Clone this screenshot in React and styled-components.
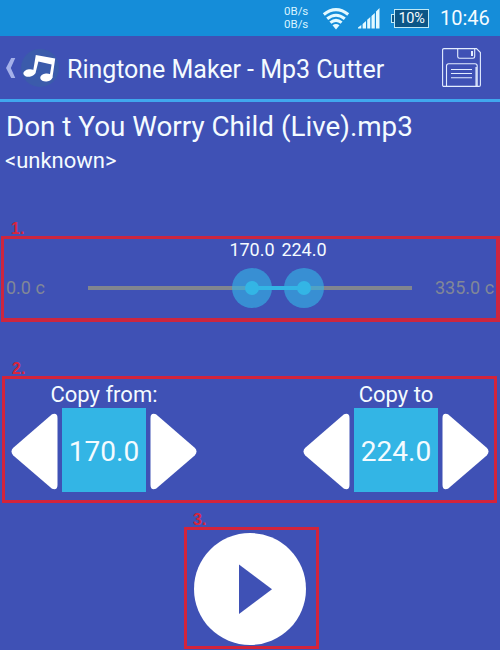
import React from "react";
import styled, { createGlobalStyle } from "styled-components";

const GlobalStyle = createGlobalStyle`
  * { box-sizing: border-box; }
  body { margin: 0; background: #3f51b5; overflow: hidden; }
`;

const Screen = styled.main`
  display: flex;
  flex-direction: column;
  width: 500px;
  height: 650px;
  overflow: hidden;
  background: #3f51b5;
  color: #f4fbff;
  font-family: Roboto, "Liberation Sans", sans-serif;
  white-space: nowrap;
`;

const StatusBar = styled.header`
  display: flex;
  flex: none;
  align-items: center;
  justify-content: flex-end;
  height: 36px;
  padding-right: 10px;
  background: #158dd9;
`;

const Traffic = styled.div`
  display: flex;
  flex-direction: column;
  width: 38px;
  font-size: 11.5px;
  line-height: 13px;
  color: #d9f3ff;
`;

const StatusIcon = styled.svg`
  display: block;
  flex: none;
  margin-right: ${(p) => p.$gap}px;
`;

const BatteryBox = styled.div`
  display: flex;
  align-items: center;
  margin-right: 11px;
`;

const BatteryTip = styled.i`
  width: 4px;
  height: 9px;
  margin-right: -1px;
  border: 1px solid #bfe9f6;
  border-right: 0;
  background: #0b5687;
`;

const BatteryBody = styled.div`
  width: 35px;
  height: 19px;
  border: 1px solid #bfe9f6;
  background: #0b5687;
  font-size: 14.5px;
  line-height: 17px;
  text-align: center;
  letter-spacing: -0.3px;
`;

const Clock = styled.time`
  width: 50px;
  font-size: 20px;
  line-height: 24px;
`;

const Toolbar = styled.nav`
  display: flex;
  flex: none;
  align-items: center;
  height: 66px;
  padding: 0 19px 0 5px;
  border-bottom: 3px solid #40a7ee;
`;

const Title = styled.h1`
  flex: 1;
  margin: 5px 0 0 8px;
  font-size: 25px;
  font-weight: 400;
  line-height: 32px;
  letter-spacing: -0.03px;
`;

const Plain = styled.svg`
  display: block;
  flex: none;
`;

const Track = styled.section`
  flex: none;
  height: 118px;
  padding: 8px 0 0 6px;
`;

const SongName = styled.h2`
  margin: 0;
  font-size: 27.8px;
  font-weight: 400;
  line-height: 34px;
`;

const Artist = styled.p`
  margin: 4px 0 0 -1px;
  font-size: 22px;
  line-height: 26px;
`;

const StepLabel = styled.div`
  display: flex;
  flex: none;
  align-items: flex-end;
  height: ${(p) => p.$height}px;
  padding-left: ${(p) => p.$left}px;
  font: bold 16px/14px "Liberation Sans", sans-serif;
  color: #d8243c;
`;

const RangeBox = styled.section`
  display: flex;
  flex: none;
  align-items: center;
  width: 499px;
  height: 86px;
  margin-left: 1px;
  padding-top: 18px;
  border: 3px solid #cc2640;
  border-width: 3px 4px 4px 3px;
`;

const Limit = styled.span`
  width: ${(p) => p.$width}px;
  padding-left: ${(p) => p.$inset}px;
  font-size: 18px;
  line-height: 22px;
  color: #818797;
`;

const Slider = styled.div`
  position: relative;
  flex: none;
  width: 324px;
  height: 4px;
  background: #81858f;
`;

const Selection = styled.div`
  width: 52px;
  height: 4px;
  margin-left: 164px;
  background: #33b5e5;
`;

const Thumb = styled.div`
  position: absolute;
  top: -18px;
  left: ${(p) => p.$at - 20}px;
  display: grid;
  place-items: center;
  width: 40px;
  height: 40px;
  border-radius: 50%;
  background: rgba(51, 181, 229, 0.62);
`;

const Dot = styled.i`
  width: 14px;
  height: 14px;
  border-radius: 50%;
  background: #33b5e5;
`;

const ThumbValue = styled.span`
  position: absolute;
  bottom: 100%;
  left: 50%;
  transform: translateX(-50%);
  font-size: 18px;
  line-height: 22px;
  padding-bottom: 7px;
`;

const CopyBox = styled.section`
  display: flex;
  flex: none;
  justify-content: space-between;
  width: 495px;
  height: 127px;
  margin-left: 2px;
  padding: 4px 5px 0 6px;
  border: 3px solid #d3243b;
`;

const Stepper = styled.div`
  display: grid;
  grid-template-columns: 47px 84px 47px;
  grid-template-rows: 25px 84px;
  column-gap: 4px;
`;

const StepperTitle = styled.h3`
  grid-column: 1 / -1;
  margin: 0;
  font-size: 22px;
  font-weight: 400;
  line-height: 24px;
  text-align: center;
`;

const StepButton = styled.button`
  display: block;
  height: 84px;
  padding: 3px 0 0;
  border: 0;
  background: none;
`;

const Value = styled.output`
  background: #33b5e5;
  font-size: 28px;
  line-height: 87px;
  text-align: center;
`;

const PlayBox = styled.section`
  display: flex;
  flex: none;
  justify-content: center;
  width: 135px;
  height: 122px;
  margin-left: 184px;
  padding: 3px 3px 0 0;
  border: 3px solid #d3243b;
`;

const PlayButton = styled.button`
  display: grid;
  place-items: center;
  width: 112px;
  height: 112px;
  padding: 0;
  border: 0;
  border-radius: 50%;
  background: #fff;
`;

function Wifi() {
  return (
    <StatusIcon $gap={8} width="28" height="24" viewBox="0 0 28 24" fill="none" stroke="#e3f9ff" strokeWidth="3.1">
      <path d="M1.8 8.5Q14 -1.2 26.2 8.5" />
      <path d="M5.2 12.7Q14 5.8 22.8 12.7" />
      <path d="M8.4 16.6Q14 12.2 19.6 16.6" />
      <path d="M10.5 19.2Q14 16.8 17.5 19.2L14 23.5Z" fill="#e3f9ff" stroke="none" />
    </StatusIcon>
  );
}

function Signal() {
  return (
    <StatusIcon $gap={11} width="22" height="21" viewBox="0 0 22 21" fill="#e3f9ff">
      <path d="M0 20.5V19.5L3.3 17V20.5ZM4.6 20.5V16L8 13V20.5ZM9.2 20.5V11.8L12.3 9V20.5ZM13.5 20.5V8L16.8 5V20.5ZM18 20.5V3.5L21.5 0V20.5Z" />
    </StatusIcon>
  );
}

function Arrow({ direction }) {
  return (
    <StepButton aria-label={direction}>
      <Plain width="47" height="77" viewBox="0 0 47 77">
        <path
          transform={direction === "Increase" ? "translate(47 0) scale(-1 1)" : undefined}
          d="M41 1.2Q46.5 -0.5 46.5 5V72Q46.5 77.5 41 75.8L2.3 42.5Q-1.3 38.5 2.3 34.8Z"
          fill="#fff"
        />
      </Plain>
    </StepButton>
  );
}

function CopyPoint({ title, value }) {
  return (
    <Stepper>
      <StepperTitle>{title}</StepperTitle>
      <Arrow direction="Decrease" />
      <Value>{value}</Value>
      <Arrow direction="Increase" />
    </Stepper>
  );
}

function MusicIcon() {
  return (
    <Plain width="38" height="38" viewBox="0 0 38 38">
      <circle cx="19" cy="19" r="19" fill="#3b5bab" />
      <g fill="#fff">
        <path d="M14.8 6L34.2 9.5L31.4 29L28.4 28.5L30.6 15.4L17.4 12.6L14.4 24.5L11.8 24Z" />
        <ellipse cx="8.3" cy="24" rx="6" ry="3.7" transform="rotate(-8 8.3 24)" />
        <ellipse cx="25.3" cy="28.5" rx="6.1" ry="4" transform="rotate(-5 25.3 28.5)" />
      </g>
    </Plain>
  );
}

function SaveIcon() {
  return (
    <Plain width="39" height="39" viewBox="0 0 39 39" fill="none" stroke="#e3edff" strokeWidth="1.1">
      <path d="M2 .6H34.5L38.4 4.5V37Q38.4 38.4 37 38.4H2Q.6 38.4 .6 37V2Q.6 .6 2 .6Z" />
      <path d="M15.7 .6V8.5Q15.7 10.2 17.4 10.2H31Q32.7 10.2 32.7 8.5V.6" />
      <path d="M29 3H31V8H29Z" fill="#e3edff" stroke="none" />
      <path d="M4.5 38.4V18Q4.5 15.8 6.7 15.8H33Q35.2 15.8 35.2 18V38.4M34 19V38" />
      <path d="M9 21.5H30M9 25.5H30M9 29.7H30" />
    </Plain>
  );
}

export default function App() {
  return (
    <>
      <GlobalStyle />
      <Screen>
        <StatusBar>
          <Traffic>
            <span>0B/s</span>
            <span>0B/s</span>
          </Traffic>
          <Wifi />
          <Signal />
          <BatteryBox>
            <BatteryTip />
            <BatteryBody>10%</BatteryBody>
          </BatteryBox>
          <Clock>10:46</Clock>
        </StatusBar>
        <Toolbar>
          <Plain width="16" height="20" viewBox="0 0 16 20">
            <path d="M6.2 0H10.3L5.8 10L10.3 20H6.2L1 10Z" fill="#a4b0e9" />
          </Plain>
          <MusicIcon />
          <Title>Ringtone Maker - Mp3 Cutter</Title>
          <SaveIcon />
        </Toolbar>
        <Track>
          <SongName>Don t You Worry Child (Live).mp3</SongName>
          <Artist>&lt;unknown&gt;</Artist>
        </Track>
        <StepLabel $left={11} $height={16}>1.</StepLabel>
        <RangeBox>
          <Limit $width={84} $inset={2}>0.0 c</Limit>
          <Slider>
            <Selection />
            <Thumb $at={164}>
              <Dot />
              <ThumbValue>170.0</ThumbValue>
            </Thumb>
            <Thumb $at={216}>
              <Dot />
              <ThumbValue>224.0</ThumbValue>
            </Thumb>
          </Slider>
          <Limit $width={84} $inset={23}>335.0 c</Limit>
        </RangeBox>
        <StepLabel $left={12} $height={54}>2.</StepLabel>
        <CopyBox>
          <CopyPoint title="Copy from:" value="170.0" />
          <CopyPoint title="Copy to" value="224.0" />
        </CopyBox>
        <StepLabel $left={193} $height={24}>3.</StepLabel>
        <PlayBox>
          <PlayButton aria-label="Play">
            <Plain width="112" height="112" viewBox="0 0 112 112">
              <path d="M45 31.5V81L78 56.3Z" fill="#3f51b5" />
            </Plain>
          </PlayButton>
        </PlayBox>
      </Screen>
    </>
  );
}
